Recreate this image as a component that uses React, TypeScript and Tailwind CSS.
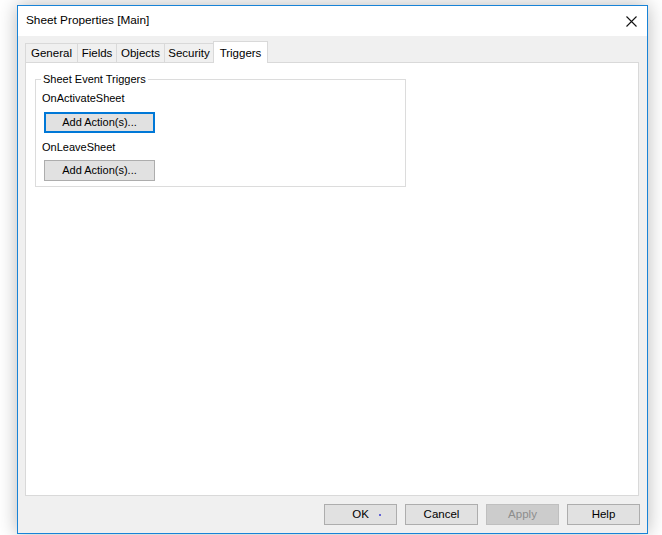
import React from 'react';

const font = { fontFamily: '"Liberation Sans", Arial, sans-serif' };

const tabs = [
  { label: 'General', w: 'w-[53px]' },
  { label: 'Fields', w: 'w-[40px]' },
  { label: 'Objects', w: 'w-[49px]' },
  { label: 'Security', w: 'w-[50px]' },
];

const WinButton: React.FC<{ label: string; disabled?: boolean; dot?: boolean }> = ({ label, disabled, dot }) => (
  <button
    disabled={disabled}
    className={`relative w-[73px] h-[21px] border text-[11.5px] leading-none flex items-center justify-center ${
      disabled ? 'bg-[#cccccc] border-[#bfbfbf] text-[#8c8c8c]' : 'bg-[#e1e1e1] border-[#adadad] text-black'
    }`}
  >
    {label}
    {dot && <span className="absolute left-[54px] top-[9px] w-[2px] h-[2px] rounded-full bg-[#3a3ad0]" />}
  </button>
);

export default function App() {
  return (
    <div className="w-[662px] h-[535px] bg-white overflow-hidden" style={font}>
      <div className="ml-[17px] mt-[5px] w-[631px] h-[529px] border border-[#1883d7] bg-[#f0f0f0] flex flex-col shadow-[0_0_18px_rgba(0,0,0,0.28)]">
        {/* Title bar */}
        <div className="h-[30px] bg-white flex items-center justify-between pl-[8px] pr-[9px] shrink-0">
          <span className="text-[11.8px] text-black">Sheet Properties [Main]</span>
          <svg width="11" height="11" viewBox="0 0 11 11" className="mr-[1px]">
            <path d="M0.5 0.5 L10.5 10.5 M10.5 0.5 L0.5 10.5" stroke="#111" strokeWidth="1.1" />
          </svg>
        </div>

        {/* Body */}
        <div className="flex-1 flex flex-col pl-[7px] pr-[7px] pt-[5px]">
          {/* Tabs */}
          <div className="flex items-end h-[21px] relative z-10">
            {tabs.map((t) => (
              <div
                key={t.label}
                className={`${t.w} h-[19px] border border-b-0 border-[#d9d9d9] -mr-[1px] bg-[#f0f0f0] text-[11.5px] text-black flex items-center justify-center pt-[2px]`}
              >
                {t.label}
              </div>
            ))}
            <div className="w-[55px] h-[22px] -mb-[1px] border border-b-0 border-[#d9d9d9] bg-white text-[11.5px] text-black flex items-start justify-center pt-[3px]">
              Triggers
            </div>
          </div>

          {/* Panel */}
          <div className="w-[614px] h-[434px] border border-[#d9d9d9] bg-white pt-[9px] pl-[9px]">
            <fieldset className="w-[371px] border border-[#dcdcdc] px-[5px] pb-[5px] m-0">
              <legend className="px-[2px] text-[11px] leading-[15px] text-black">Sheet Event Triggers</legend>
              <div className="mt-[4px] ml-[1px] text-[11px] leading-[15px] text-black">OnActivateSheet</div>
              <button className="mt-[6px] ml-[3px] w-[111px] h-[21px] border-2 border-[#0078d7] bg-[#e1e1e1] text-[11px] leading-none text-black flex items-center justify-center">
                Add Action(s)...
              </button>
              <div className="mt-[7px] ml-[1px] text-[11px] leading-[15px] text-black">OnLeaveSheet</div>
              <button className="mt-[5px] ml-[3px] w-[111px] h-[21px] border border-[#adadad] bg-[#e1e1e1] text-[11px] leading-none text-black flex items-center justify-center">
                Add Action(s)...
              </button>
            </fieldset>
          </div>

          {/* Footer buttons */}
          <div className="flex justify-end gap-[8px] mt-[8px]">
            <WinButton label="OK" dot />
            <WinButton label="Cancel" />
            <WinButton label="Apply" disabled />
            <WinButton label="Help" />
          </div>
        </div>
      </div>
    </div>
  );
}
